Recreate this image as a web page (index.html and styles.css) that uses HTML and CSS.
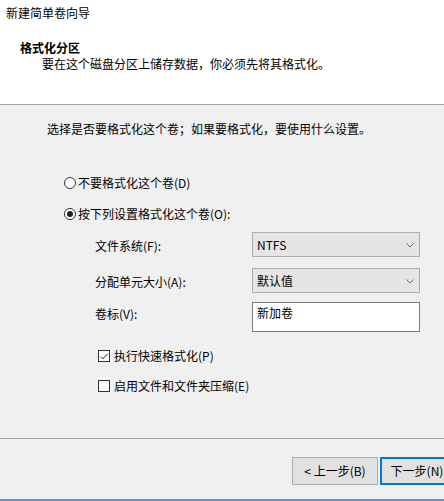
FILE: index.html
```html
<!DOCTYPE html>
<html lang="zh-CN">
<head>
<meta charset="utf-8">
<title>新建简单卷向导</title>
<link rel="stylesheet" href="styles.css">
</head>
<body>
<div class="window">
  <div class="header">
    <div class="title">新建简单卷向导</div>
    <div class="heading">格式化分区</div>
    <div class="subtitle">要在这个磁盘分区上储存数据，你必须先将其格式化。</div>
  </div>
  <div class="content">
    <p class="intro">选择是否要格式化这个卷；如果要格式化，要使用什么设置。</p>
    <div class="radio radio-first"><span class="radio-circle"></span><span>不要格式化这个卷(D)</span></div>
    <div class="radio radio-second"><span class="radio-circle checked"></span><span>按下列设置格式化这个卷(O):</span></div>
    <div class="form">
      <div class="row row-1">
        <span class="label">文件系统(F):</span>
        <div class="select"><span>NTFS</span><svg class="chev" width="8" height="5" viewBox="0 0 8 5"><polyline points="0.5,0.5 4,4 7.5,0.5" fill="none" stroke="#6a6a6a" stroke-width="1"/></svg></div>
      </div>
      <div class="row row-2">
        <span class="label">分配单元大小(A):</span>
        <div class="select"><span>默认值</span><svg class="chev" width="8" height="5" viewBox="0 0 8 5"><polyline points="0.5,0.5 4,4 7.5,0.5" fill="none" stroke="#6a6a6a" stroke-width="1"/></svg></div>
      </div>
      <div class="row row-3">
        <span class="label label-top">卷标(V):</span>
        <div class="textbox">新加卷</div>
      </div>
    </div>
    <div class="check check-first"><span class="box"><svg width="11" height="11" viewBox="0 0 11 11"><polyline points="1.5,5.5 4.2,8.2 9.5,2.5" fill="none" stroke="#222" stroke-width="1.1"/></svg></span><span>执行快速格式化(P)</span></div>
    <div class="check check-second"><span class="box"></span><span>启用文件和文件夹压缩(E)</span></div>
  </div>
  <div class="footer">
    <div class="buttons">
      <button class="btn">&lt; 上一步(B)</button>
      <button class="btn primary">下一步(N)</button>
    </div>
  </div>
</div>
</body>
</html>
```

FILE: styles.css
```css
* { box-sizing: border-box; }

html, body {
  margin: 0;
  padding: 0;
  width: 444px;
  height: 501px;
  overflow: hidden;
  background: #f0f0f0;
}

body {
  font-family: "Noto Sans CJK SC", "Noto Sans", sans-serif;
  font-size: 12px;
  line-height: 16px;
  color: #000;
}

.window {
  width: 444px;
  height: 501px;
  display: flex;
  flex-direction: column;
  border-bottom: 2px solid #5d93cc;
}

.header {
  height: 105px;
  background: #fff;
  border-bottom: 1px solid #a0a0a0;
  padding-top: 5px;
  flex: none;
}

.title {
  padding-left: 6px;
}

.heading {
  margin-top: 19px;
  padding-left: 20px;
  font-weight: bold;
}

.subtitle {
  padding-left: 42px;
}

.content {
  height: 334px;
  flex: none;
  border-bottom: 1px solid #a0a0a0;
  padding-left: 47px;
  padding-top: 16px;
}

.intro {
  margin: 0;
}

.radio {
  display: flex;
  align-items: center;
  margin-left: 17px;
}

.radio-first { margin-top: 38px; }
.radio-second { margin-top: 15px; }

.radio-circle {
  width: 12px;
  height: 12px;
  border: 1px solid #333;
  border-radius: 50%;
  background: #fff;
  margin-right: 2px;
  display: flex;
  align-items: center;
  justify-content: center;
  flex: none;
}

.radio-circle.checked::after {
  content: "";
  width: 6px;
  height: 6px;
  border-radius: 50%;
  background: #222;
}

.form {
  margin-top: 10px;
  margin-left: 48px;
  display: flex;
  flex-direction: column;
}

.row {
  display: flex;
  align-items: flex-start;
}

.row-2 { margin-top: 11px; }
.row-3 { margin-top: 9px; }

.label {
  width: 157px;
  padding-top: 6px;
  flex: none;
}

.label.label-top {
  padding-top: 4px;
}

.select {
  width: 168px;
  height: 25px;
  background: #e5e5e5;
  border: 1px solid #adadad;
  display: flex;
  align-items: center;
  justify-content: space-between;
  padding: 0 5px 0 4px;
}

.chev {
  display: block;
  margin-top: 1px;
}

.textbox {
  width: 168px;
  height: 30px;
  background: #fff;
  border: 1px solid #7a7a7a;
  padding: 2px 4px;
}

.check {
  display: flex;
  align-items: center;
  margin-left: 51px;
}

.check-first { margin-top: 16px; }
.check-second { margin-top: 14px; }

.box {
  width: 12px;
  height: 12px;
  border: 1px solid #333;
  background: #fff;
  margin-right: 4px;
  display: flex;
  align-items: center;
  justify-content: center;
  flex: none;
}

.box svg { display: block; }

.footer {
  flex: 1;
  padding-top: 18px;
}

.buttons {
  display: flex;
  padding-left: 292px;
  gap: 2px;
}

.btn {
  font-family: inherit;
  font-size: 12px;
  line-height: 16px;
  color: #000;
  height: 28px;
  background: #e1e1e1;
  border: 1px solid #adadad;
  padding: 0;
  margin: 0;
  flex: none;
}

.btn:first-child {
  width: 86px;
}

.btn.primary {
  width: 74px;
  border: 2px solid #0078d7;
}
```
